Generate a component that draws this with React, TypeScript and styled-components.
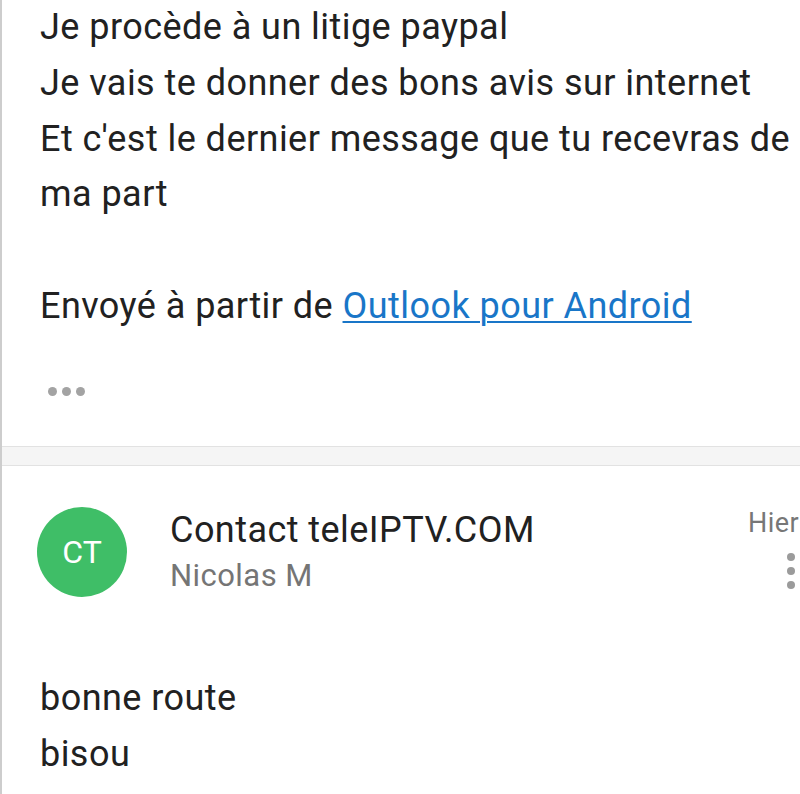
import React from "react";
import styled, { createGlobalStyle } from "styled-components";

const Global = createGlobalStyle`
  html, body { margin: 0; padding: 0; background: #fff; }
  body { font-family: Roboto, "Noto Sans", sans-serif; -webkit-font-smoothing: antialiased; }
`;

const Page = styled.div`
  width: 800px;
  height: 794px;
  overflow: hidden;
  box-sizing: border-box;
  border-left: 2px solid #cdcdcd;
  background: #fff;
  letter-spacing: 0.45px;
`;

const Message = styled.section`
  padding: 0 0 0 38px;
`;

const Body = styled.div`
  font-size: 36px;
  line-height: 55.8px;
  color: #212121;
  white-space: nowrap;
`;

const Line = styled.div`
  height: 55.8px;
`;

const Link = styled.a`
  color: #1976c8;
  text-decoration: underline;
  text-decoration-thickness: 2px;
  text-underline-offset: 3px;
`;

const More = styled.div`
  display: flex;
  gap: 5px;
  padding: 52px 0 0 8px;
  height: 9px;
`;

const Dot = styled.span`
  width: 9px;
  height: 9px;
  border-radius: 50%;
  background: #a3a3a3;
`;

const Divider = styled.div`
  margin-top: 50px;
  height: 18px;
  background: #f5f5f5;
  border-top: 1px solid #e2e2e2;
  border-bottom: 1px solid #e2e2e2;
  margin-left: -2px;
`;

const Header = styled.div`
  display: flex;
  align-items: flex-start;
  height: 133px;
  padding: 0 0 0 35px;
`;

const Avatar = styled.div`
  margin-top: 41px;
  width: 90px;
  height: 90px;
  border-radius: 50%;
  background: #3fbe67;
  color: #fff;
  font-size: 32px;
  letter-spacing: 0;
  display: flex;
  align-items: center;
  justify-content: center;
  flex: none;
`;

const Meta = styled.div`
  margin-left: 43px;
  padding-top: 42px;
  flex: 1;
  display: flex;
  flex-direction: column;
`;

const Sender = styled.div`
  font-size: 36px;
  line-height: 44px;
  color: #212121;
`;

const Sub = styled.div`
  font-size: 31px;
  line-height: 47px;
  color: #757575;
`;

const Side = styled.div`
  width: 52px;
  display: flex;
  flex-direction: column;
  align-items: flex-start;
  padding-top: 37px;
`;

const When = styled.div`
  font-size: 27px;
  line-height: 40px;
  color: #777;
  white-space: nowrap;
`;

const VDots = styled.div`
  display: flex;
  flex-direction: column;
  gap: 6px;
  margin: 10px 0 0 39px;
`;

const VDot = styled.span`
  width: 8px;
  height: 8px;
  border-radius: 50%;
  background: #9b9b9b;
`;

const Reply = styled.div`
  padding: 72px 0 0 38px;
  font-size: 36px;
  line-height: 55.8px;
  color: #212121;
`;

export default function App() {
  return (
    <>
      <Global />
      <Page>
        <Message>
          <Body>
            <Line>Je procède à un litige paypal</Line>
            <Line>Je vais te donner des bons avis sur internet</Line>
            <Line>Et c'est le dernier message que tu recevras de</Line>
            <Line>ma part</Line>
            <Line />
            <Line>
              Envoyé à partir de <Link href="#">Outlook pour Android</Link>
            </Line>
          </Body>
          <More>
            <Dot />
            <Dot />
            <Dot />
          </More>
        </Message>
        <Divider />
        <Header>
          <Avatar>CT</Avatar>
          <Meta>
            <Sender>Contact teleIPTV.COM</Sender>
            <Sub>Nicolas M</Sub>
          </Meta>
          <Side>
            <When>Hier</When>
            <VDots>
              <VDot />
              <VDot />
              <VDot />
            </VDots>
          </Side>
        </Header>
        <Reply>
          <div>bonne route</div>
          <div>bisou</div>
        </Reply>
      </Page>
    </>
  );
}
